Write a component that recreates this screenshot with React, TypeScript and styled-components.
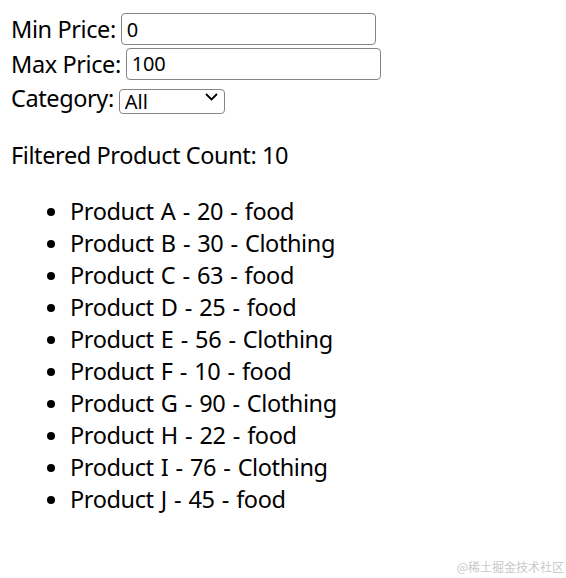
import React, { useState } from 'react';
import styled, { createGlobalStyle } from 'styled-components';

type TProduct = {
  name: string;
  price: number;
  category: string;
};

const products: TProduct[] = [
  { name: 'Product A', price: 20, category: 'food' },
  { name: 'Product B', price: 30, category: 'Clothing' },
  { name: 'Product C', price: 63, category: 'food' },
  { name: 'Product D', price: 25, category: 'food' },
  { name: 'Product E', price: 56, category: 'Clothing' },
  { name: 'Product F', price: 10, category: 'food' },
  { name: 'Product G', price: 90, category: 'Clothing' },
  { name: 'Product H', price: 22, category: 'food' },
  { name: 'Product I', price: 76, category: 'Clothing' },
  { name: 'Product J', price: 45, category: 'food' },
];

const GlobalStyle = createGlobalStyle`
  html, body {
    margin: 0;
    background: #fff;
  }
  body {
    padding: 12px 12px 12px 11px;
    font-family: 'Noto Sans', 'Open Sans', sans-serif;
    font-size: 23.5px;
    letter-spacing: -0.4px;
    line-height: 32px;
    color: #000;
  }
`;

const Page = styled.div`
  position: relative;
  min-height: 554px;
`;

const Row = styled.div`
  display: flex;
  align-items: center;
  height: 34.5px;
`;

const Label = styled.label`
  white-space: nowrap;
`;

const Field = styled.input`
  box-sizing: border-box;
  width: 255px;
  height: 32px;
  margin-left: 5px;
  padding: 0 5px;
  border: 1px solid #858585;
  border-radius: 4px;
  font-family: inherit;
  font-size: 20px;
  letter-spacing: -0.2px;
  color: #000;
  outline: none;
`;

const SelectWrap = styled.div`
  position: relative;
  margin-left: 5px;
  margin-top: 3px;
`;

const Select = styled.select`
  appearance: none;
  box-sizing: border-box;
  width: 106px;
  height: 25px;
  padding: 0 0 0 5px;
  border: 1px solid #858585;
  border-radius: 4px;
  background: #fff;
  font-family: inherit;
  font-size: 20px;
  line-height: 23px;
  color: #000;
  outline: none;
`;

const Chevron = styled.svg`
  position: absolute;
  right: 7px;
  top: 9px;
  pointer-events: none;
`;

const Count = styled.p`
  margin: 23px 0 24px;
`;

const List = styled.ul`
  margin: 24px 0;
  padding-left: 59px;
  word-spacing: 1.5px;
`;

const Watermark = styled.div`
  position: absolute;
  right: -10px;
  bottom: -9px;
  font-family: 'Noto Sans CJK SC', sans-serif;
  font-size: 12px;
  letter-spacing: 0;
  word-spacing: 0;
  line-height: 16px;
  color: #c9c9c9;
`;

export default function App() {
  const [minPrice, setMinPrice] = useState('0');
  const [maxPrice, setMaxPrice] = useState('100');
  const [category, setCategory] = useState('All');

  const filtered = products.filter(
    p =>
      p.price >= Number(minPrice) &&
      p.price <= Number(maxPrice) &&
      (category === 'All' || p.category === category),
  );

  return (
    <Page>
      <GlobalStyle />
      <Row>
        <Label>Min Price:</Label>
        <Field value={minPrice} onChange={e => setMinPrice(e.target.value)} />
      </Row>
      <Row>
        <Label>Max Price:</Label>
        <Field value={maxPrice} onChange={e => setMaxPrice(e.target.value)} />
      </Row>
      <Row>
        <Label>Category:</Label>
        <SelectWrap>
          <Select value={category} onChange={e => setCategory(e.target.value)}>
            <option value="All">All</option>
            <option value="food">food</option>
            <option value="Clothing">Clothing</option>
          </Select>
          <Chevron width="13" height="8" viewBox="0 0 13 8">
            <path d="M1 1l5.5 5.5L12 1" fill="none" stroke="#000" strokeWidth="1.8" />
          </Chevron>
        </SelectWrap>
      </Row>
      <Count>Filtered Product Count: {filtered.length}</Count>
      <List>
        {filtered.map(p => (
          <li key={p.name}>
            {p.name} - {p.price} - {p.category}
          </li>
        ))}
      </List>
      <Watermark>@稀土掘金技术社区</Watermark>
    </Page>
  );
}
